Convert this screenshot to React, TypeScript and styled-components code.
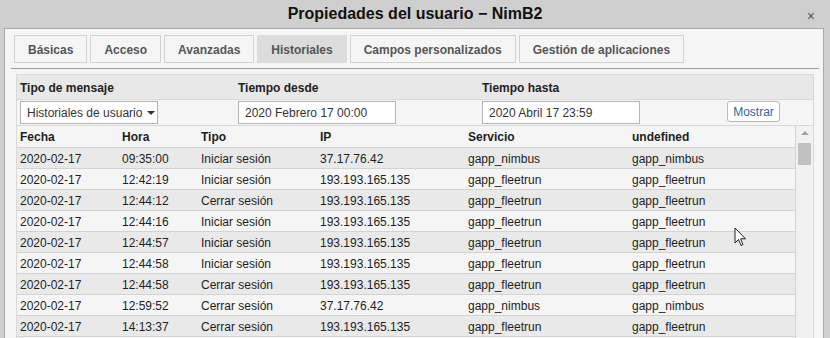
import React from "react";
import styled, { createGlobalStyle } from "styled-components";

const Global = createGlobalStyle`
  html, body { margin: 0; padding: 0; }
  body {
    background: #cfcfcf;
    font-family: "Liberation Sans", Arial, sans-serif;
    font-size: 12px;
    color: #222;
    overflow: hidden;
  }
`;

const Window = styled.div`
  position: relative;
  width: 830px;
  height: 338px;
  display: flex;
  flex-direction: column;
  overflow: hidden;
  background: #cfcfcf;
`;

const TitleBar = styled.div`
  height: 28px;
  flex: none;
  display: grid;
  grid-template-columns: 1fr auto 1fr;
  align-items: center;
`;

const Title = styled.div`
  grid-column: 2;
  font-size: 16px;
  font-weight: bold;
  color: #111;
`;

const Close = styled.div`
  grid-column: 3;
  justify-self: end;
  margin-right: 15px;
  margin-top: 3px;
  font-size: 14px;
  color: #555;
  line-height: 1;
`;

const Panel = styled.div`
  flex: 1;
  min-height: 0;
  margin: 0 6px 0 4px;
  border: 1px solid #a9a9a9;
  border-bottom: none;
  background: #f5f5f5;
  padding-top: 6px;
  display: flex;
  flex-direction: column;
  overflow: hidden;
`;

const TabBar = styled.div`
  margin: 0 4px 0 6px;
  padding: 0 0 5px 3px;
  border-bottom: 1px solid #9d9d9d;
  display: flex;
  gap: 3px;
`;

const Tab = styled.div<{ $active?: boolean }>`
  height: 28px;
  box-sizing: border-box;
  padding: 1px 13px 0;
  display: flex;
  align-items: center;
  border: 1px solid ${(p) => (p.$active ? "#dcdcdc" : "#d2d2d2")};
  background: ${(p) => (p.$active ? "#dcdcdc" : "#f5f5f5")};
  color: #555;
  font-weight: bold;
  font-size: 12px;
  white-space: nowrap;
`;

const Content = styled.div`
  margin: 5px 9px 0 11px;
  border: 1px solid #dadada;
  border-bottom: none;
  flex: 1;
  min-height: 0;
  display: flex;
  flex-direction: column;
  overflow: hidden;
`;

const FilterRow = styled.div<{ $head?: boolean }>`
  display: grid;
  grid-template-columns: 218px 244px 245px 1fr;
  align-items: center;
  box-sizing: border-box;
  height: ${(p) => (p.$head ? "25px" : "26px")};
  background: ${(p) => (p.$head ? "#e8e8e8" : "#f5f5f5")};
  border-bottom: 1px solid #d8d8d8;
  flex: none;
`;

const Label = styled.div`
  padding: 1px 0 0 3px;
  font-weight: bold;
  color: #222;
`;

const Cell = styled.div`
  padding-left: 3px;
  display: flex;
  align-items: center;
`;

const Select = styled.div`
  width: 138px;
  height: 23px;
  box-sizing: border-box;
  border: 1px solid #b5b5b5;
  background: #fff;
  display: flex;
  align-items: center;
  padding-left: 6px;
  color: #333;
  gap: 5px;
  white-space: nowrap;
`;

const Caret = styled.span`
  width: 0;
  height: 0;
  border-left: 4px solid transparent;
  border-right: 4px solid transparent;
  border-top: 4px solid #333;
`;

const Input = styled.div`
  width: 158px;
  height: 23px;
  box-sizing: border-box;
  border: 1px solid #b5b5b5;
  background: #fff;
  display: flex;
  align-items: center;
  padding-left: 6px;
  color: #333;
  white-space: nowrap;
`;

const Button = styled.div`
  width: 53px;
  height: 21px;
  margin-top: -2px;
  box-sizing: border-box;
  border: 1px solid #b9b9b9;
  border-radius: 3px;
  background: #fff;
  color: #2f66a8;
  display: flex;
  align-items: center;
  justify-content: center;
`;

const TableArea = styled.div`
  flex: 1;
  min-height: 0;
  display: flex;
`;

const Table = styled.div`
  flex: 1;
  min-width: 0;
  border-right: 1px solid #d2d2d2;
  overflow: hidden;
`;

const Row = styled.div<{ $bg: string; $head?: boolean }>`
  display: grid;
  grid-template-columns: 102px 79px 119px 148px 164px 1fr;
  align-items: center;
  box-sizing: border-box;
  height: ${(p) => (p.$head ? "22px" : "21px")};
  background: ${(p) => p.$bg};
  border-bottom: 1px solid #d3d3d3;
  font-weight: ${(p) => (p.$head ? "bold" : "normal")};
  color: #1e1e1e;
`;

const TCell = styled.div`
  padding: 1px 0 0 3px;
  white-space: nowrap;
  overflow: hidden;
`;

const Scrollbar = styled.div`
  width: 17px;
  flex: none;
  background: #f1f1f1;
  display: flex;
  flex-direction: column;
  align-items: center;
`;

const ArrowUp = styled.div`
  margin-top: 5px;
  width: 0;
  height: 0;
  border-left: 4px solid transparent;
  border-right: 4px solid transparent;
  border-bottom: 4px solid #a3a3a3;
`;

const Thumb = styled.div`
  margin-top: 8px;
  width: 13px;
  height: 22px;
  background: #c1c1c1;
`;

const Cursor = styled.svg`
  position: absolute;
  left: 734px;
  top: 227px;
`;

const tabs = [
  "Básicas",
  "Acceso",
  "Avanzadas",
  "Historiales",
  "Campos personalizados",
  "Gestión de aplicaciones",
];

const L = "Iniciar sesión";
const C = "Cerrar sesión";
const IPA = "37.17.76.42";
const IPB = "193.193.165.135";
const N = "gapp_nimbus";
const F = "gapp_fleetrun";

const rows: [string, string, string, string, string, string][] = [
  ["2020-02-17", "09:35:00", L, IPA, N, N],
  ["2020-02-17", "12:42:19", L, IPB, F, F],
  ["2020-02-17", "12:44:12", C, IPB, F, F],
  ["2020-02-17", "12:44:16", L, IPB, F, F],
  ["2020-02-17", "12:44:57", L, IPB, F, F],
  ["2020-02-17", "12:44:58", L, IPB, F, F],
  ["2020-02-17", "12:44:58", C, IPB, F, F],
  ["2020-02-17", "12:59:52", C, IPA, N, N],
  ["2020-02-17", "14:13:37", C, IPB, F, F],
];

export default function App() {
  return (
    <>
      <Global />
      <Window>
        <TitleBar>
          <Title>Propiedades del usuario − NimB2</Title>
          <Close>×</Close>
        </TitleBar>
        <Panel>
          <TabBar>
            {tabs.map((t) => (
              <Tab key={t} $active={t === "Historiales"}>
                {t}
              </Tab>
            ))}
          </TabBar>
          <Content>
            <FilterRow $head>
              <Label>Tipo de mensaje</Label>
              <Label>Tiempo desde</Label>
              <Label>Tiempo hasta</Label>
              <Label />
            </FilterRow>
            <FilterRow>
              <Cell>
                <Select>
                  Historiales de usuario <Caret />
                </Select>
              </Cell>
              <Cell>
                <Input>2020 Febrero 17 00:00</Input>
              </Cell>
              <Cell>
                <Input>2020 Abril 17 23:59</Input>
              </Cell>
              <Cell>
                <Button>Mostrar</Button>
              </Cell>
            </FilterRow>
            <TableArea>
              <Table>
                <Row $head $bg="#f5f5f5">
                  <TCell>Fecha</TCell>
                  <TCell>Hora</TCell>
                  <TCell>Tipo</TCell>
                  <TCell>IP</TCell>
                  <TCell>Servicio</TCell>
                  <TCell>undefined</TCell>
                </Row>
                {rows.map((r, i) => (
                  <Row key={i} $bg={i % 2 === 0 ? "#e9e9e9" : "#f5f5f5"}>
                    {r.map((c, j) => (
                      <TCell key={j}>{c}</TCell>
                    ))}
                  </Row>
                ))}
              </Table>
              <Scrollbar>
                <ArrowUp />
                <Thumb />
              </Scrollbar>
            </TableArea>
          </Content>
        </Panel>
        <Cursor width="14" height="21" viewBox="0 0 14 21">
          <path
            d="M1 1 L1 16 L4.5 12.5 L7 18.5 L9 17.6 L6.6 11.8 L11.5 11.8 Z"
            fill="#fff"
            stroke="#222"
            strokeWidth="1"
          />
        </Cursor>
      </Window>
    </>
  );
}
